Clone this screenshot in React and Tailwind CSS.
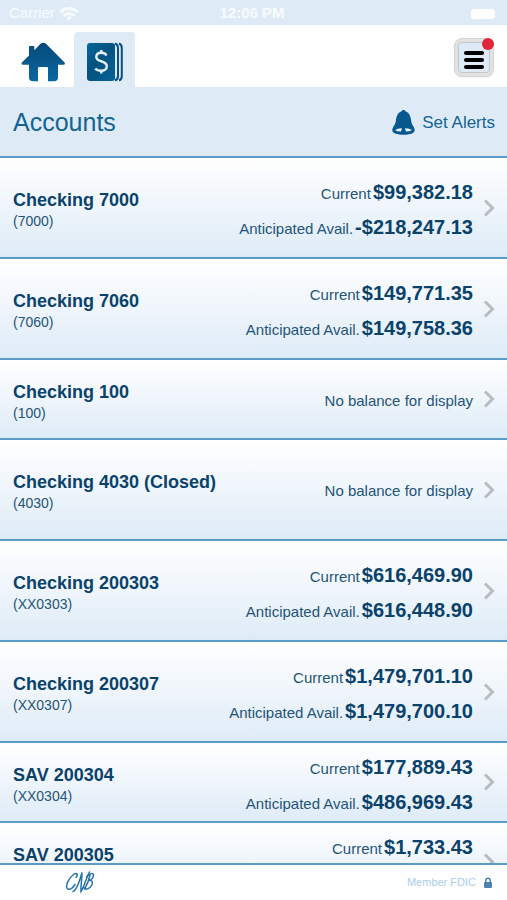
const accounts = [
  { name: 'Checking 7000', number: '7000', current: '$99,382.18', available: '-$218,247.13', size: 'tall' },
  { name: 'Checking 7060', number: '7060', current: '$149,771.35', available: '$149,758.36', size: 'tall' },
  { name: 'Checking 100', number: '100', size: 'short' },
  { name: 'Checking 4030 (Closed)', number: '4030', size: 'tall' },
  { name: 'Checking 200303', number: 'XX0303', current: '$616,469.90', available: '$616,448.90', size: 'tall' },
  { name: 'Checking 200307', number: 'XX0307', current: '$1,479,701.10', available: '$1,479,700.10', size: 'tall' },
  { name: 'SAV 200304', number: 'XX0304', current: '$177,889.43', available: '$486,969.43', size: 'short' },
  { name: 'SAV 200305', current: '$1,733.43', size: 'short' },
];

const rowPadding = {
  tall: 'pt-[17px] pb-3',
  short: 'pt-[7px] pb-px',
};

function WifiIcon() {
  return (
    <svg className="h-4 w-5" viewBox="0 0 20 16" fill="none" stroke="currentColor" strokeWidth="3" aria-hidden="true">
      <path d="M1.500 6.200C6 1.200 14 1.200 18.500 6.200" />
      <path d="M4.800 9.800C7.800 6.800 12.200 6.800 15.200 9.800" />
      <path d="M10 14.500 7 11.600C8.800 10.200 11.200 10.200 13 11.600Z" fill="currentColor" stroke="none" />
    </svg>
  );
}

function HouseIcon() {
  return (
    <svg className="h-10 w-11" viewBox="0 0 44 40" aria-hidden="true">
      <defs>
        <linearGradient id="house" x1="0" y1="0" x2="0" y2="1">
          <stop offset="0" stopColor="#054a78" />
          <stop offset="1" stopColor="#0a67a3" />
        </linearGradient>
      </defs>
      <path
        fill="url(#house)"
        d="M19.500 1.800Q22.300 -.2 25 1.800L43.600 20.500Q44.600 22.700 42.500 22.700H37V35.500Q37 39.300 33 39.300H27V26Q27 25 26 25H18Q17 25 17 26V39.300H12Q8 39.300 8 35.500V22.700H2Q-.1 22.700 .9 20.500L8 13.600V5Q8 4 9 4H12.300Q13.300 4 13.300 5V8.200Z"
      />
    </svg>
  );
}

function AccountsIcon() {
  return (
    <svg className="h-10 w-9" viewBox="0 0 36 40" aria-hidden="true">
      <defs>
        <linearGradient id="ledger" x1="0" y1="0" x2="1" y2="1">
          <stop offset="0" stopColor="#08669f" />
          <stop offset="0.45" stopColor="#04527f" />
          <stop offset="1" stopColor="#06629c" />
        </linearGradient>
      </defs>
      <rect x="0" y="1" width="28" height="38" rx="3" fill="url(#ledger)" />
      <g fill="none" stroke="#07517f" strokeWidth="2">
        <path d="M28 1.500Q31 2.500 31 6V34Q31 37.500 28 38.500" />
        <path d="M32 1.500Q34.800 2.500 34.800 6V34Q34.800 37.500 32 38.500" />
      </g>
      <path
        d="M19.500 13.500C18.500 11.800 16.800 10.800 14.500 10.800C11.200 10.800 9.300 12.500 9.300 14.900C9.300 20.500 19.800 18 19.800 24.300C19.800 27 17.500 28.800 14.200 28.800C11.500 28.800 9.500 28 8.300 26.500"
        fill="none"
        stroke="#e4f1fb"
        strokeWidth="2.400"
      />
      <path d="M14.300 8V11.500M14.300 28V31.500" stroke="#e4f1fb" strokeWidth="2.400" />
    </svg>
  );
}

function BellIcon() {
  return (
    <svg className="h-7 w-[23px]" viewBox="0 0 23 28" aria-hidden="true">
      <path
        fill="#07588f"
        d="M11.500 1C12.600 1 13.400 1.600 13.700 2.500C17.300 3.700 18.700 7.500 19.200 12C19.700 16.500 22.700 18 22.700 21.300C22.700 24.300 17.500 25.800 11.500 25.800S.3 24.300 .3 21.300C.3 18 3.300 16.500 3.800 12C4.300 7.500 5.700 3.700 9.300 2.500C9.600 1.600 10.400 1 11.500 1Z"
      />
      <path fill="#e7f3fc" d="M3 21Q6 19 9.800 19.200V20.500Q9 21.200 9.200 22.500Q5 22.500 3 21Z" />
      <path fill="#e7f3fc" d="M20 21Q17 19 13.200 19.200V20.500Q14 21.200 13.800 22.500Q18 22.500 20 21Z" />
    </svg>
  );
}

function Chevron() {
  return (
    <svg className="h-5 w-3 shrink-0" viewBox="0 0 12 20" fill="none" aria-hidden="true">
      <path d="M2 2.500 9.500 10 2 17.500" stroke="#b9bcbf" strokeWidth="3" />
    </svg>
  );
}

function Monogram() {
  return (
    <svg className="h-6 w-8" viewBox="0 0 32 24" fill="none" stroke="#2673a8" strokeWidth="1.500" strokeLinecap="round" role="img" aria-label="CNB">
      <path d="M12 6.500C14.500 3.500 13 1 9.500 3.500C5 7 1.500 14 3 17C4.500 20 8.500 17.500 11 13.500" />
      <path d="M9 20.500C13 19.500 16 8.500 18 1.500C18 8.500 16.500 15.500 17 20.500C20 16 22 7.500 25.500 1" />
      <path d="M26 4C25 9 23 14 20.500 18M22.500 6C25 2 30 1.500 29.500 4.500C29 7.500 26.500 9 24.800 9.300C28 9 29.300 11 27.800 14C25.800 18 21.500 19.500 19.500 16.500" />
    </svg>
  );
}

function LockIcon() {
  return (
    <svg className="h-3 w-2" viewBox="0 0 8 12" fill="none" aria-hidden="true">
      <path d="M1.800 6V3.500Q1.800 1.200 4 1.200T6.200 3.500V6" stroke="#4d82af" strokeWidth="1.500" />
      <rect y="5" width="8" height="6" rx="1" fill="#4d82af" />
    </svg>
  );
}

function StatusBar() {
  return (
    <div className="grid h-[25px] shrink-0 grid-cols-[1fr_auto_1fr] items-center bg-[#deebf7] pl-[9px] pr-3 pt-[2px] text-[15px] text-[#f8fbfe]">
      <span className="flex items-center gap-1">
        Carrier <WifiIcon />
      </span>
      <span className="font-bold">12:06 PM</span>
      <span className="h-2.5 w-6 justify-self-end rounded-[3px] bg-white" />
    </div>
  );
}

function NavBar() {
  return (
    <nav className="flex h-[62px] shrink-0 items-end justify-between bg-white pl-[21px] pr-[13px]">
      <div className="flex items-end gap-[9px]">
        <button type="button" aria-label="Home" className="pb-[5px]">
          <HouseIcon />
        </button>
        <button type="button" aria-label="Accounts" className="flex h-[55px] w-[61px] items-end justify-center rounded-t bg-[#deebf7] pb-[5px]">
          <AccountsIcon />
        </button>
      </div>
      <button
        type="button"
        aria-label="Menu"
        className="relative mb-[10px] h-[39px] w-10 rounded-lg border border-[#d4d4d4] bg-[#e2e2e2] p-[3px] shadow-xs"
      >
        <span className="flex h-full w-full flex-col items-center justify-center gap-[3px] rounded-sm border border-[#c3c8cd] bg-[#deebf7] pt-1">
          <span className="h-[4px] w-5 rounded-full bg-black" />
          <span className="h-[4px] w-5 rounded-full bg-black" />
          <span className="h-[4px] w-5 rounded-full bg-black" />
        </span>
        <span className="absolute -right-px -top-px h-3 w-3 rounded-full bg-[#e22639]" />
      </button>
    </nav>
  );
}

function Balance({ label, amount }) {
  return (
    <p className="flex h-[35px] items-baseline gap-[2px] whitespace-nowrap leading-[35px]">
      <span className="text-[15px] text-[#245477]">{label}</span>
      <span className="text-[20px] font-bold">{amount}</span>
    </p>
  );
}

function AccountRow({ account }) {
  return (
    <li className="border-b-2 border-[#5b9cc5]">
      <a href="#account" className="flex items-center gap-2.5 bg-linear-to-b from-white to-[#deebf7] pl-[13px] pr-3 text-[#0a426b]">
        <div className={`flex flex-1 items-center justify-between ${rowPadding[account.size]}`}>
          <div>
            <h2 className="text-[18px] font-bold leading-[22px]">{account.name}</h2>
            <p className="h-5 text-[14px] leading-5 text-[#245477]">{account.number && `(${account.number})`}</p>
          </div>
          {account.current ? (
            <div className="flex h-[70px] flex-col items-end">
              <Balance label="Current" amount={account.current} />
              {account.available && <Balance label="Anticipated Avail." amount={account.available} />}
            </div>
          ) : (
            <p className="flex h-[70px] items-center pb-[2px] text-[15px] text-[#245477]">No balance for display</p>
          )}
        </div>
        <Chevron />
      </a>
    </li>
  );
}

export default function App() {
  return (
    <div className="flex h-screen flex-col overflow-hidden bg-white font-['Liberation_Sans',Arial,sans-serif]">
      <StatusBar />
      <NavBar />
      <header className="flex h-[71px] shrink-0 items-center justify-between border-b-2 border-[#5b9cc5] bg-[#deebf7] pl-[13px] pr-3 pt-[2px] text-[#136394]">
        <h1 className="text-[25px]">Accounts</h1>
        <button type="button" className="flex items-center gap-[7px] text-[17px]">
          <BellIcon />
          Set Alerts
        </button>
      </header>

      <ul className="min-h-0 flex-1 overflow-hidden">
        {accounts.map((account) => (
          <AccountRow key={account.name} account={account} />
        ))}
      </ul>

      <footer className="flex h-[37px] shrink-0 items-center justify-between border-t-2 border-[#5b9cc5] bg-white pl-16 pr-[15px]">
        <Monogram />
        <span className="flex items-center gap-2 text-[11px] text-[#a9cdec]">
          Member FDIC <LockIcon />
        </span>
      </footer>
    </div>
  );
}
